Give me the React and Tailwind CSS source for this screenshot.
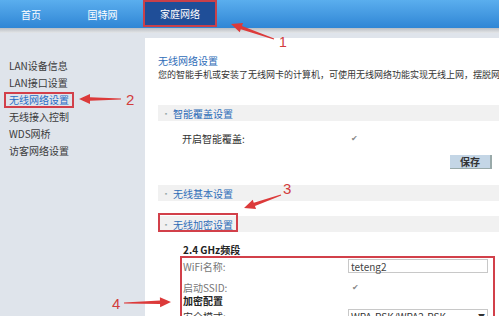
import React from 'react';

const FONT = { fontFamily: '"Noto Sans CJK SC", "Liberation Sans", sans-serif' };
const NUM = { fontFamily: '"Liberation Sans", sans-serif' };

function Arrow({ x1, y1, x2, y2 }) {
  // tapered red arrow, tail (x1,y1) -> tip (x2,y2)
  const dx = x2 - x1;
  const dy = y2 - y1;
  const len = Math.hypot(dx, dy);
  const ux = dx / len;
  const uy = dy / len;
  const nx = -uy;
  const ny = ux;
  const head = 11;
  const hw = 5;
  const bx = x2 - ux * head;
  const by = y2 - uy * head;
  const pts = [
    [x1 + nx * 0.6, y1 + ny * 0.6],
    [bx + nx * 1.8, by + ny * 1.8],
    [bx + nx * hw, by + ny * hw],
    [x2, y2],
    [bx - nx * hw, by - ny * hw],
    [bx - nx * 1.8, by - ny * 1.8],
    [x1 - nx * 0.6, y1 - ny * 0.6],
  ];
  return <polygon points={pts.map((p) => p.join(',')).join(' ')} fill="#dc3a3a" />;
}

function SectionBar({ label, className = '' }) {
  return (
    <div className={`h-[16px] bg-[#f1f1f1] flex items-center pl-[5px] text-[10px] text-[#2f6db8] ${className}`}>
      <span className="text-[6px] text-[#9aa] mr-[4px]">▪</span>
      {label}
    </div>
  );
}

export default function App() {
  const side = ['LAN设备信息', 'LAN接口设置', '无线网络设置', '无线接入控制', 'WDS网桥', '访客网络设置'];
  return (
    <div className="relative w-[499px] h-[316px] overflow-hidden bg-[#dfe4eb]" style={FONT}>
      {/* top nav */}
      <div className="h-[28px] bg-gradient-to-b from-[#5aaeee] to-[#2f86d5] flex text-[10px] text-white">
        <div className="w-[62px] flex items-center justify-center">首页</div>
        <div className="w-[81px] flex items-center justify-center">国特网</div>
        <div className="w-[74px] h-[27px] bg-[#1f4e98] border-2 border-[#c8404a] flex items-center justify-center">家庭网络</div>
      </div>
      <div className="h-[5px] bg-gradient-to-b from-[#b9bec4] to-[#e4e6e8]" />

      <div className="flex">
        {/* sidebar */}
        <div className="w-[145px] shrink-0 pt-[24px] pl-[9px] text-[10px] text-[#3b3b3b]">
          {side.map((s) => (
            <div key={s} className="h-[17px] flex items-center whitespace-nowrap">
              {s === '无线网络设置' ? (
                <span className="-ml-[5px] px-[3px] h-[16px] flex items-center border-2 border-[#d2404a] text-[#2a6cc6]">{s}</span>
              ) : (
                s
              )}
            </div>
          ))}
        </div>

        {/* content */}
        <div className="w-[354px] shrink-0 overflow-hidden mt-[5px] bg-white pl-[13px] h-[300px]">
          <div className="mt-[16px] text-[10px] text-[#2f6db8] leading-[14px]">无线网络设置</div>
          <div className="mt-[1px] text-[9px] text-[#333] whitespace-nowrap leading-[12px]">
            您的智能手机或安装了无线网卡的计算机，可使用无线网络功能实现无线上网，摆脱网线的束缚。
          </div>
          <SectionBar label="智能覆盖设置" className="mt-[24px]" />

          <div className="h-[34px] flex items-center text-[10px] text-[#333]">
            <span className="ml-[24px] w-[169px]">开启智能覆盖:</span>
            <span className="text-[8px] text-[#888]">✔</span>
          </div>
          <div className="flex justify-end pr-[7px]">
            <div className="w-[42px] h-[14px] bg-[#c4d6e6] border-r-2 border-b border-[#9aa] flex items-center justify-center text-[10px] font-bold text-[#333]">
              保存
            </div>
          </div>

          <SectionBar label="无线基本设置" className="mt-[16px]" />
          <div className="mt-[15px] relative">
            <SectionBar label="无线加密设置" />
            <div className="absolute left-0 -top-[3px] w-[80px] h-[19px] border-2 border-[#d2404a]" />
          </div>

          <div className="ml-[25px] mt-[12px] text-[10px] font-bold text-[#222] leading-[12px]">2.4 GHz频段</div>
          <div className="ml-[22px] w-[315px] h-[70px] border-2 border-[#d2404a] border-b-0 pl-[1px] text-[10px] text-[#777]">
            <div className="h-[16px] flex items-center justify-between pr-[5px]">
              <span>WiFi名称:</span>
              <div className="w-[140px] h-[14px] border border-[#c8c8c8] px-[2px] flex items-center text-[#444]">teteng2</div>
            </div>
            <div className="h-[14px] mt-[6px] flex items-center">
              <span className="w-[169px]">启动SSID:</span>
              <span className="text-[8px] text-[#888]">✔</span>
            </div>
            <div className="h-[13px] flex items-center font-bold text-[#222]">加密配置</div>
            <div className="h-[16px] mt-[1px] flex items-center justify-between pr-[5px] text-[#333]">
              <span>安全模式:</span>
              <div className="w-[140px] h-[14px] border border-[#c8c8c8] px-[2px] flex items-center justify-between">
                <span>WPA-PSK/WPA2-PSK</span>
                <span className="text-[7px]">▼</span>
              </div>
            </div>
          </div>
        </div>
      </div>

      {/* annotations */}
      <svg className="absolute inset-0 pointer-events-none" width="499" height="316">
        <Arrow x1={274} y1={39} x2={231} y2={24} />
        <Arrow x1={121} y1={99} x2={79} y2={99} />
        <Arrow x1={281} y1={195} x2={244} y2={208} />
        <Arrow x1={124} y1={303} x2={171} y2={302} />
      </svg>
      <span className="absolute left-[279px] top-[35px] text-[14px] text-[#d23c3c] leading-none" style={NUM}>1</span>
      <span className="absolute left-[126px] top-[92px] text-[15px] text-[#d23c3c] leading-none" style={NUM}>2</span>
      <span className="absolute left-[283px] top-[181px] text-[15px] text-[#d23c3c] leading-none" style={NUM}>3</span>
      <span className="absolute left-[112px] top-[296px] text-[15px] text-[#d23c3c] leading-none" style={NUM}>4</span>
    </div>
  );
}
